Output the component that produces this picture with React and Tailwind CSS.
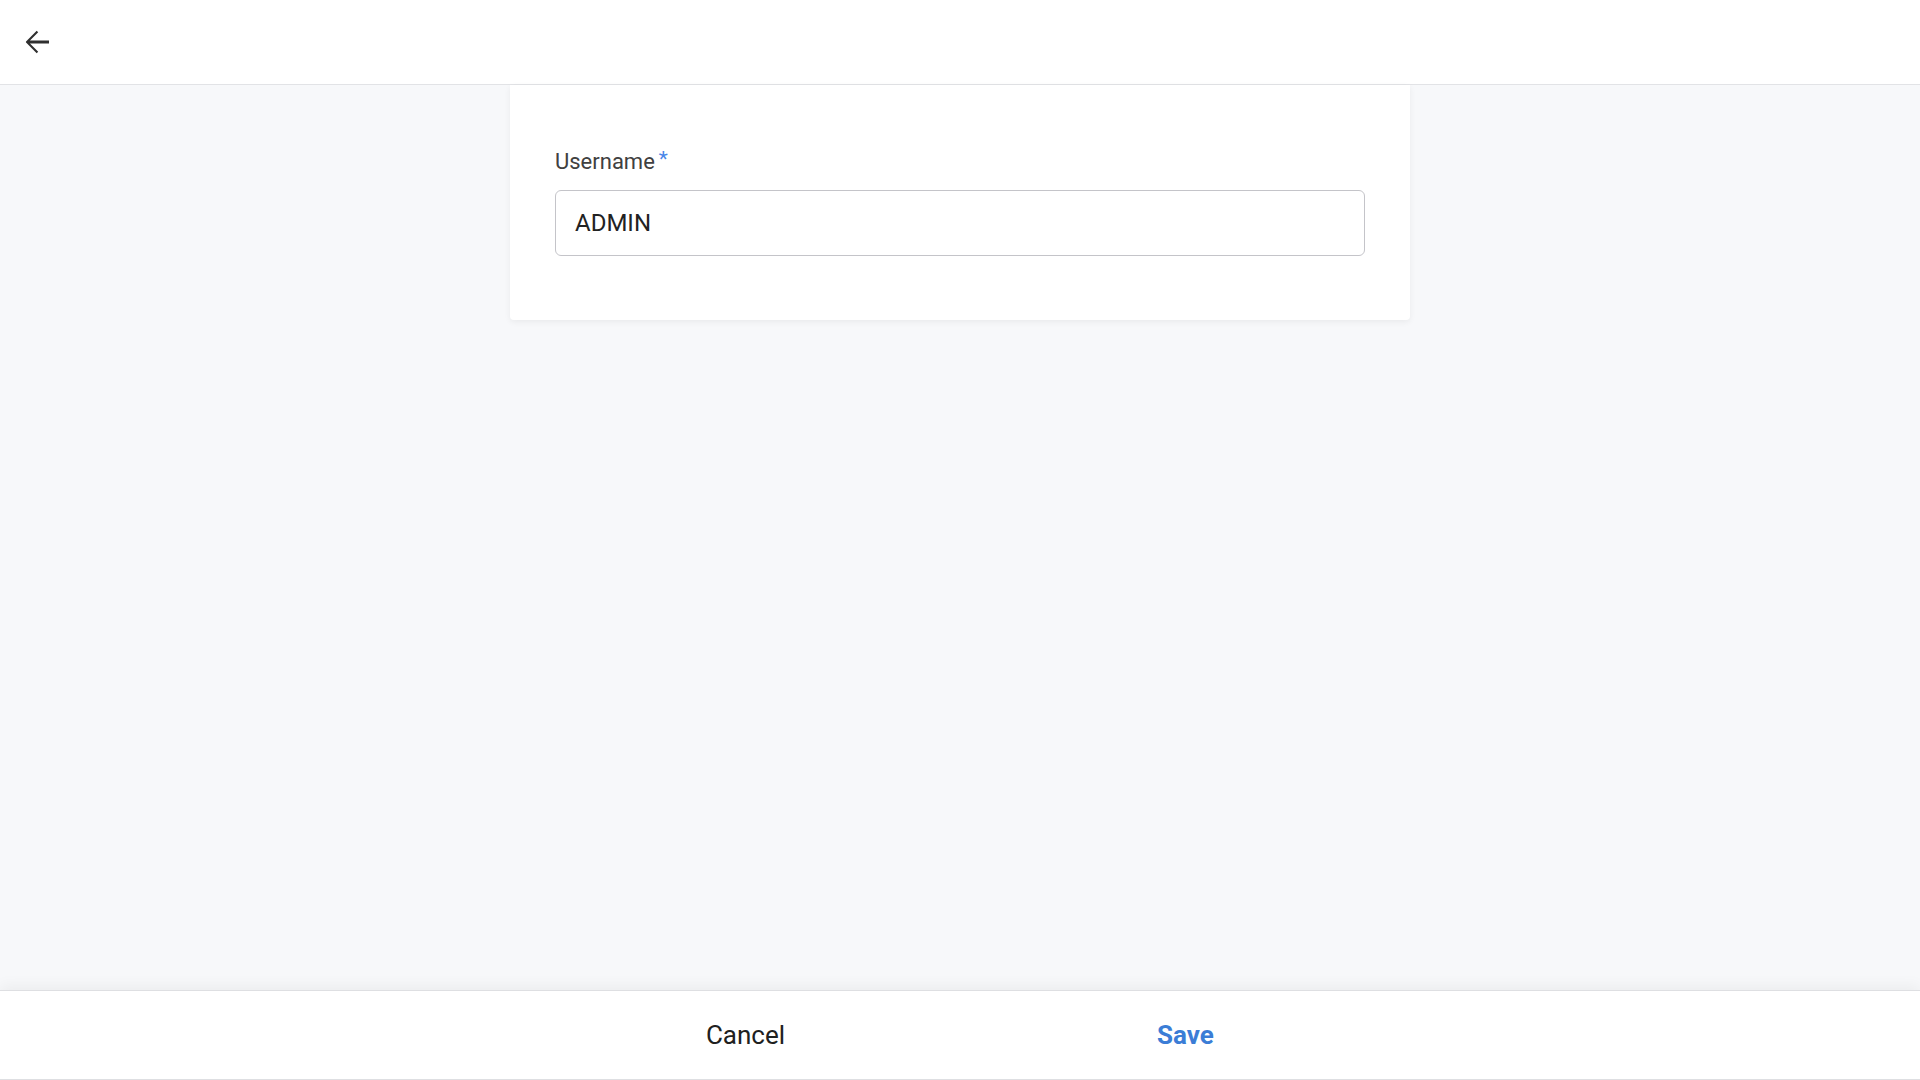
import React from "react";

export default function App() {
  return (
    <div className="w-[1920px] h-[1080px] flex flex-col bg-[#f7f8fa] overflow-hidden" style={{ fontFamily: "Roboto, 'Noto Sans', sans-serif" }}>
      <header className="h-[85px] shrink-0 bg-white border-b border-[#e2e3e6] flex items-center pl-[19px]">
        <button className="w-[36px] h-[36px] flex items-center justify-center">
          <svg width="36" height="36" viewBox="0 0 24 24" fill="#2f2f2f">
            <path d="M20 11.05H7.3l5.5-5.5-1-1L4.7 11.7c-0.15 0.15-0.15 0.45 0 0.6l7.1 7.15 1-1-5.5-5.5H20z" />
          </svg>
        </button>
      </header>
      <main className="flex-1 flex justify-center">
        <div className="w-[900px] self-start bg-white rounded-b-[4px] shadow-[0_2px_6px_rgba(0,0,0,0.06)] px-[45px] pt-[65px] pb-[64px]">
          <label className="flex h-[24px] items-center text-[22px] leading-[24px] text-[#404040]">
            Username<span className="text-[#4a86e8] text-[21px] self-start leading-[16px] ml-[4px] mt-[1px]">*</span>
          </label>
          <div className="mt-[16px] h-[66px] rounded-[6px] border border-[#c4c4c9] flex items-center px-[19px] text-[24px] text-[#222222]">
            ADMIN
          </div>
        </div>
      </main>
      <footer className="h-[90px] shrink-0 bg-white border-t border-[#dedfe2] border-b shadow-[0_-4px_14px_rgba(0,0,0,0.05)] flex justify-center items-center pl-[11px]">
        <button className="w-[440px] h-full flex items-center justify-center text-[26px] text-[#202020]">Cancel</button>
        <button className="w-[440px] h-full flex items-center justify-center text-[26px] font-bold text-[#3b7dd6]">Save</button>
      </footer>
    </div>
  );
}
